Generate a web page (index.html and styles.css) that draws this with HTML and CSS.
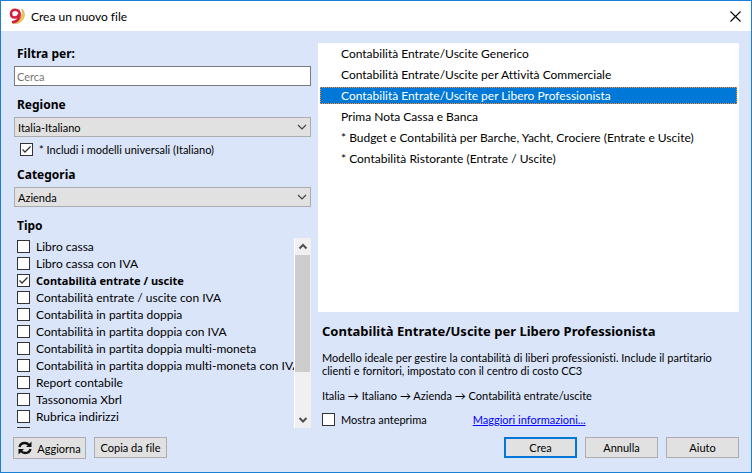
FILE: index.html
```html
<!DOCTYPE html>
<html lang="it">
<head>
<meta charset="utf-8">
<meta name="viewport" content="width=device-width, initial-scale=1">
<title>Crea un nuovo file</title>
<link rel="stylesheet" href="styles.css">
</head>
<body>
<div class="window">
  <header class="titlebar">
    <svg class="logo" viewBox="0 0 16 17" aria-hidden="true">
      <path d="M13 1C16 4 16 9.500 13 12.500C11 14.700 7.500 16 4 15.300C8 14 10.500 12.500 12 9.500C13.500 6.500 13.500 4 13 1Z" fill="#f3d047" stroke="#c9ab57" stroke-width="0.800"/>
      <path d="M10.200 6C9.800 8.300 8.200 9.500 5.900 9.500C3.500 9.500 2 8 2 5.700C2 3.300 3.600 1.700 6 1.700C9 1.700 10.700 3.600 10.700 6.700C10.700 10.800 8 13.700 3 14.200" fill="none" stroke="#d6203f" stroke-width="2.600"/>
    </svg>
    <h1 class="title">Crea un nuovo file</h1>
    <button class="close" type="button" aria-label="Chiudi">
      <svg viewBox="0 0 11 11" aria-hidden="true"><path d="M.5 .5L10.500 10.500M10.500 .5L.5 10.500" fill="none" stroke="#000" stroke-width="1.100"/></svg>
    </button>
  </header>
  <main class="content">
    <section class="filters">
      <label class="heading" for="search">Filtra per:</label>
      <input class="search" id="search" type="text" placeholder="Cerca">
      <label class="heading" for="region">Regione</label>
      <div class="combo">
        <select id="region"><option>Italia-Italiano</option></select>
        <svg class="chevron" viewBox="0 0 10 6" aria-hidden="true"><path d="M1 1L5 5L9 1"/></svg>
      </div>
      <label class="check universal"><input type="checkbox" checked>* Includi i modelli universali (Italiano)</label>
      <label class="heading" for="category">Categoria</label>
      <div class="combo">
        <select id="category"><option>Azienda</option></select>
        <svg class="chevron" viewBox="0 0 10 6" aria-hidden="true"><path d="M1 1L5 5L9 1"/></svg>
      </div>
      <h2 class="heading">Tipo</h2>
      <div class="types">
        <div class="type-list">
          <label class="check"><input type="checkbox">Libro cassa</label>
          <label class="check"><input type="checkbox">Libro cassa con IVA</label>
          <label class="check selected"><input type="checkbox" checked>Contabilità entrate / uscite</label>
          <label class="check"><input type="checkbox">Contabilità entrate / uscite con IVA</label>
          <label class="check"><input type="checkbox">Contabilità in partita doppia</label>
          <label class="check"><input type="checkbox">Contabilità in partita doppia con IVA</label>
          <label class="check"><input type="checkbox">Contabilità in partita doppia multi-moneta</label>
          <label class="check"><input type="checkbox">Contabilità in partita doppia multi-moneta con IVA</label>
          <label class="check"><input type="checkbox">Report contabile</label>
          <label class="check"><input type="checkbox">Tassonomia Xbrl</label>
          <label class="check"><input type="checkbox">Rubrica indirizzi</label>
          <span class="check"><input type="checkbox" aria-label="Altro"></span>
        </div>
        <div class="scrollbar" aria-hidden="true">
          <svg class="arrow" viewBox="0 0 16 17"><path d="M4.500 10.500L8 7L11.500 10.500"/></svg>
          <div class="track"><div class="thumb"></div></div>
          <svg class="arrow" viewBox="0 0 16 17"><path d="M4.500 7L8 10.500L11.500 7"/></svg>
        </div>
      </div>
    </section>
    <section class="models">
      <ul class="model-list">
        <li>Contabilità Entrate/Uscite Generico</li>
        <li>Contabilità Entrate/Uscite per Attività Commerciale</li>
        <li class="current">Contabilità Entrate/Uscite per Libero Professionista</li>
        <li>Prima Nota Cassa e Banca</li>
        <li>* Budget e Contabilità per Barche, Yacht, Crociere (Entrate e Uscite)</li>
        <li>* Contabilità Ristorante (Entrate / Uscite)</li>
      </ul>
      <div class="details">
        <h2 class="model-title">Contabilità Entrate/Uscite per Libero Professionista</h2>
        <p class="description">Modello ideale per gestire la contabilità di liberi professionisti. Include il partitario clienti e fornitori, impostato con il centro di costo CC3</p>
        <p class="path">Italia → Italiano → Azienda → Contabilità entrate/uscite</p>
        <div class="options">
          <label class="check"><input type="checkbox">Mostra anteprima</label>
          <a class="more" href="#">Maggiori informazioni...</a>
        </div>
      </div>
    </section>
  </main>
  <footer class="actions">
    <button class="button refresh" type="button">
      <svg viewBox="0 0 14 14" aria-hidden="true">
        <path d="M1.500 6C2 3.500 4.200 2 6.800 2C8.600 2 10 2.700 11.200 4M12.500 8C12 10.500 9.800 12 7.200 12C5.400 12 4 11.300 2.800 10" fill="none" stroke="#111" stroke-width="2.300"/>
        <path d="M13.500 .5V6H8ZM.5 13.500V8H6Z" fill="#111"/>
      </svg>Aggiorna</button>
    <button class="button" type="button">Copia da file</button>
    <span class="spacer"></span>
    <button class="button primary" type="button">Crea</button>
    <button class="button" type="button">Annulla</button>
    <button class="button" type="button">Aiuto</button>
  </footer>
</div>
</body>
</html>
```
FILE: styles.css
```css
* { box-sizing: border-box; }

body {
  margin: 0;
  color: #000;
  font: 12px/17px Lato, "Open Sans", sans-serif;
  font-variant-ligatures: none;
}

h1, h2, p, ul { margin: 0; padding: 0; }
button, input, select { font: inherit; font-variant-ligatures: none; color: inherit; }

.window {
  display: flex;
  flex-direction: column;
  height: 100vh;
  min-height: 440px;
  border: 1px solid #1a80d6;
  background: #dae5f9;
}

.titlebar {
  display: flex;
  align-items: center;
  gap: 6px;
  height: 30px;
  padding: 0 9px 0 8px;
  background: #fff;
}
.logo { width: 16px; height: 17px; }
.title { flex: 1; font-size: 12px; font-weight: 400; }
.close { display: flex; padding: 1px; border: 0; background: none; }
.close svg { width: 11px; height: 11px; }

.content {
  display: flex;
  flex: 1;
  gap: 7px;
  min-height: 0;
  padding: 12px 12px 9px 13px;
}

.filters {
  display: flex;
  flex-direction: column;
  flex: 0 0 297px;
  min-width: 0;
  min-height: 0;
}
.heading {
  height: 23px;
  padding: 0 3px;
  font: bold 12px/22px "Noto Sans", sans-serif;
}
.search {
  height: 20px;
  margin-bottom: 8px;
  padding: 0 2px;
  border: 1px solid #7a7a7a;
  background: #fff;
  font-size: 11px;
}
.search::placeholder { color: #777; opacity: 1; }

.combo { display: grid; align-items: center; }
.combo select, .chevron { grid-area: 1 / 1; }
.combo select {
  appearance: none;
  width: 100%;
  height: 20px;
  padding: 0 3px;
  border: 1px solid #adadad;
  border-radius: 0;
  background: #e1e1e1;
  font-size: 11px;
}
.chevron {
  justify-self: end;
  width: 10px;
  height: 6px;
  margin-right: 4px;
  fill: none;
  stroke: #444;
  stroke-width: 1.2;
  pointer-events: none;
}

.check {
  display: flex;
  flex: none;
  align-items: center;
  gap: 6px;
  height: 17px;
  white-space: nowrap;
}
.check input {
  appearance: none;
  flex: none;
  width: 13px;
  height: 13px;
  margin: 0;
  border: 1px solid #333;
  background: #fff;
}
.check input:checked {
  background: #fff url("data:image/svg+xml,%3Csvg xmlns='http://www.w3.org/2000/svg' viewBox='0 0 11 11'%3E%3Cpath d='M1.500 5.500L4 8L9.500 2.500' fill='none' stroke='%23333' stroke-width='1.300'/%3E%3C/svg%3E");
}
.universal { height: 25px; margin: 0 0 2px 6px; font-size: 11px; }
.selected { font: bold 11px/17px "Noto Sans", sans-serif; }

.combo + .heading { height: 31px; padding-top: 8px; }

.types { display: flex; flex: 1; min-height: 0; }
.type-list { flex: 1; min-width: 0; padding-left: 3px; overflow: hidden; }
.scrollbar {
  display: flex;
  flex-direction: column;
  width: 17px;
  border-left: 1px solid #fff;
  background: #f0f0f0;
}
.arrow { width: 16px; height: 17px; fill: none; stroke: #505050; stroke-width: 2; }
.track { flex: 1; padding-right: 1px; }
.thumb { height: 75%; background: #cdcdcd; }

.models { display: flex; flex: 1; flex-direction: column; min-width: 0; }
.model-list {
  flex: 1;
  min-height: 0;
  overflow: hidden;
  background: #fff;
  list-style: none;
}
.model-list li {
  height: 17px;
  margin: 2px 2px 4px;
  padding-left: 21px;
  white-space: nowrap;
}
.model-list .current { background: #0078d7; color: #fff; outline: 1px dotted #ff8728; outline-offset: -1px; }

.details { padding: 9px 4px 0; font-size: 11px; line-height: 13px; }
.model-title { font: bold 13px/20px "Noto Sans", sans-serif; }
.description { margin-top: 10px; }
.path { margin-top: 12px; }
.options { display: flex; gap: 46px; margin-top: 9px; line-height: 17px; }
.more { color: #00f; }

.actions {
  display: flex;
  align-items: flex-start;
  gap: 8px;
  padding: 0 12px 13px;
}
.spacer { flex: 1; }
.button {
  display: flex;
  align-items: center;
  justify-content: center;
  gap: 5px;
  width: 73px;
  height: 21px;
  padding: 0;
  border: 1px solid #adadad;
  background: #e1e1e1;
  font-size: 11px;
  white-space: nowrap;
}
.refresh { height: 22px; }
.refresh svg { width: 14px; height: 14px; }
.primary { border: 2px solid #0078d7; }
```
